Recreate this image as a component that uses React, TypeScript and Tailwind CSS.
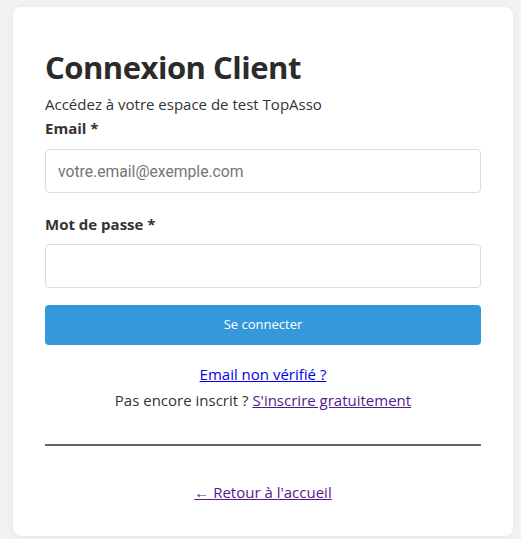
import { useState } from "react";

export default function App() {
  const [email, setEmail] = useState("");
  const [motDePasse, setMotDePasse] = useState("");

  return (
    <main className="min-h-screen bg-[#f2f2f2] pt-[7px] pb-[3px] pl-[13px] font-['Open_Sans',sans-serif] text-[#333]">
      <div className="w-[500px] rounded-lg bg-white px-8 pt-[40px] pb-[33px] shadow-[0_1px_6px_rgba(0,0,0,0.06)]">
        <h1 className="text-[31px] leading-[40px] font-bold text-[#2b2b2b] tracking-[-0.5px]">
          Connexion Client
        </h1>
        <p className="mt-[6px] text-[15px] leading-[22px]">
          Accédez à votre espace de test TopAsso
        </p>

        <form onSubmit={(e) => e.preventDefault()}>
          {/* EMAIL */}
          <label className="mt-[2px] block text-[15px] leading-[22px] font-bold">Email *</label>
          <input
            type="email"
            value={email}
            onChange={(e) => setEmail(e.target.value)}
            placeholder="votre.email@exemple.com"
            className="mt-[10px] block h-[44px] w-full rounded border border-[#dcdcdc] px-3 font-['Roboto',sans-serif] text-[15.7px] placeholder:text-[#757575] outline-none"
          />

          {/* MOT DE PASSE */}
          <label className="mt-[20px] block text-[15px] leading-[22px] font-bold">Mot de passe *</label>
          <input
            type="password"
            value={motDePasse}
            onChange={(e) => setMotDePasse(e.target.value)}
            className="mt-[9px] block h-[44px] w-full rounded border border-[#dcdcdc] px-3 text-[16px] outline-none"
          />

          <button
            type="submit"
            className="mt-[17px] block h-[40px] w-full rounded bg-[#3498db] text-[13px] text-white"
          >
            Se connecter
          </button>
        </form>

        <div className="mt-[18px] text-center text-[15px] leading-[22px]">
          <a href="#" className="text-[#0000ee] underline">
            Email non vérifié ?
          </a>
        </div>
        <p className="mt-[4px] text-center text-[15px] leading-[22px]">
          Pas encore inscrit ?{" "}
          <a href="#" className="text-[#551a8b] underline">
            S'inscrire gratuitement
          </a>
        </p>

        <hr className="mt-[33px] border-t-2 border-[#666]" />

        <div className="mt-[35px] text-center text-[15px] leading-[22px]">
          <a href="#" className="text-[#551a8b] underline">
            ← Retour à l'accueil
          </a>
        </div>
      </div>
    </main>
  );
}
